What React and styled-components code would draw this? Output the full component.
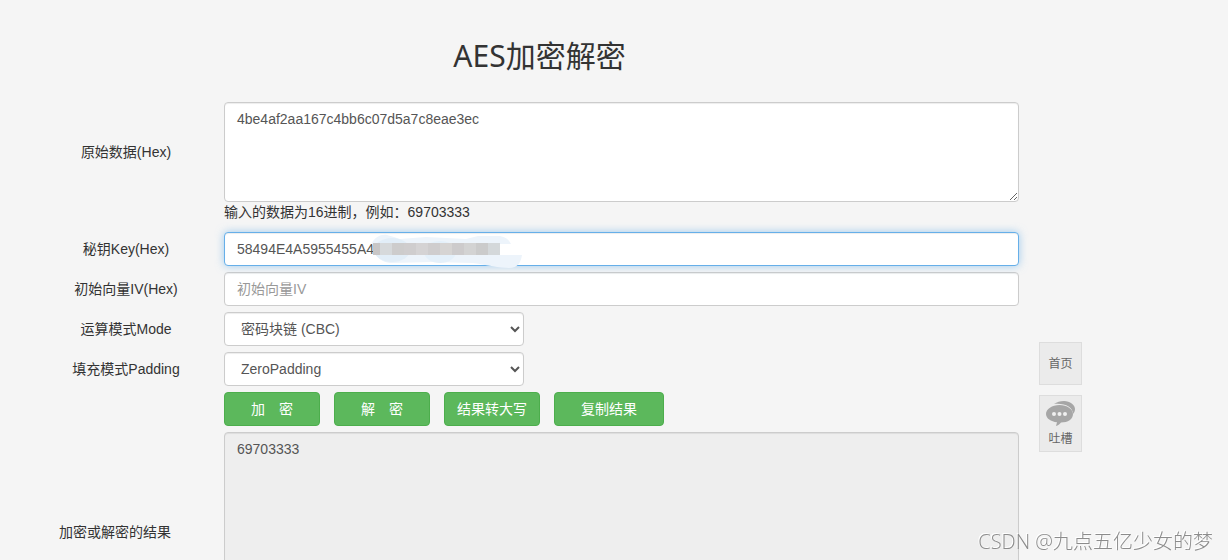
import React, { useState } from "react";
import styled, { createGlobalStyle, css } from "styled-components";

const GlobalStyle = createGlobalStyle`
  * { box-sizing: border-box; }
  body {
    margin: 0;
    background: #f5f5f5;
    color: #333;
    font: 14px/20px "Liberation Sans", "Noto Sans CJK SC", sans-serif;
    overflow: hidden;
  }
`;

const Page = styled.div`
  display: flex;
  gap: 20px;
  height: 100vh;
  overflow: hidden;
  padding: 0 146px 0 30px;
`;

const Main = styled.main`
  flex: 1;
  min-width: 0;
`;

const Title = styled.h1`
  margin: 0;
  padding: 36px 0 26px 30px;
  font: 400 30px/40px "Noto Sans", "Noto Sans CJK SC", sans-serif;
  text-align: center;
`;

const Form = styled.form`
  display: flex;
  flex-direction: column;
  gap: 6px;
`;

const Row = styled.div`
  display: grid;
  grid-template-columns: 194px minmax(0, 1fr);
  align-items: center;
`;

const Label = styled.label`
  padding-right: ${({ $inset }) => ($inset ? 24 : 2)}px;
  text-align: center;
`;

const Hint = styled.p`
  grid-column: 2;
  margin: 0 0 4px;
`;

const control = css`
  display: block;
  width: 100%;
  height: 34px;
  margin: 0;
  padding: 6px 12px;
  border: 1px solid #ccc;
  border-radius: 4px;
  background: #fff;
  color: #555;
  font: inherit;
  box-shadow: inset 0 1px 1px rgba(0, 0, 0, 0.075);
  outline: 0;
  &::placeholder { color: #999; opacity: 1; }
`;

const Input = styled.input`
  ${control}
  ${({ $active }) => $active && css`
    border-color: #66afe9;
    box-shadow: inset 0 1px 1px rgba(0, 0, 0, 0.075), 0 0 8px rgba(102, 175, 233, 0.6);
  `}
`;

const TextArea = styled.textarea`
  ${control}
  height: ${({ $tall }) => ($tall ? 200 : 100)}px;
  resize: vertical;
  &:read-only { background: #eee; }
`;

const Select = styled.select`
  ${control}
  width: 300px;
`;

const Masked = styled.div`
  position: relative;
`;

const Mosaic = styled.svg`
  position: absolute;
  left: 146px;
  top: 0;
  pointer-events: none;
`;

const Actions = styled.div`
  grid-column: 2;
  display: flex;
  gap: 14px;
`;

const Button = styled.button`
  width: ${({ $wide }) => ($wide ? 110 : 96)}px;
  height: 34px;
  padding: 0;
  border: 1px solid #4cae4c;
  border-radius: 4px;
  background: #5cb85c;
  color: #fff;
  font: inherit;
  white-space: pre;
  cursor: pointer;
`;

const Side = styled.nav`
  display: flex;
  flex-direction: column;
  gap: 10px;
  width: 43px;
  padding-top: 342px;
`;

const SideLink = styled.a`
  display: flex;
  flex-direction: column;
  align-items: center;
  padding: ${({ $icon }) => ($icon ? "4px 0 2px" : "11px 0 10px")};
  border: 1px solid #ddd;
  background: #ebebeb;
  color: #666;
  font-size: 12px;
  text-decoration: none;
`;

const Watermark = styled.div`
  position: fixed;
  right: 15px;
  bottom: 4px;
  color: #8c8c8c;
  font: 300 20px/28px "Open Sans", "Noto Sans CJK SC", sans-serif;
  text-shadow: -1px -1px 0 #fff;
`;

const tiles = ["#d6d9db", "#cdcccc", "#cfcdce", "#d5d3d4", "#cfcdce", "#d6d4d3", "#cdcbcc", "#d3d3d3", "#cbcbcb", "#d4d8da"];

function ChatIcon() {
  return (
    <svg width="30" height="29" viewBox="0 0 30 29" aria-hidden="true">
      <path fill="#a6a6a6" d="M8 4C11 2 14 1 18 1c6 0 11 4 11 8 0 2-1 4-2 5C27 7 19 3 8 4z" />
      <path fill="#a6a6a6" d="M13.500 5C21 5 27 9 27 14s-5 8.500-12 8.500c-1.500 2-3 3-5 3.500l1-3.700C5 21.500 0 18.500 0 14 0 9 6 5 13.500 5z" />
      <g fill="#f0f0f0"><circle cx="8" cy="14" r="2" /><circle cx="13.500" cy="14" r="2" /><circle cx="19" cy="14" r="2" /></g>
    </svg>
  );
}

export default function App() {
  const [data, setData] = useState("4be4af2aa167c4bb6c07d5a7c8eae3ec");
  const [key, setKey] = useState("58494E4A5955455A4");
  return (
    <>
      <GlobalStyle />
      <Page>
        <Main>
          <Title>AES加密解密</Title>
          <Form onSubmit={(e) => e.preventDefault()}>
            <Row>
              <Label htmlFor="data">原始数据(Hex)</Label>
              <TextArea id="data" value={data} spellCheck={false} onChange={(e) => setData(e.target.value)} />
              <Hint>输入的数据为16进制，例如：69703333</Hint>
            </Row>
            <Row>
              <Label htmlFor="key">秘钥Key(Hex)</Label>
              <Masked>
                <Input id="key" $active value={key} onChange={(e) => setKey(e.target.value)} />
                <Mosaic width="156" height="38" viewBox="0 0 156 38" aria-hidden="true">
                  <path fill="#edf4fb" d="M2 11C5 5 11 2 17 3c5 1 9 3 13 4l26-2 40 2 12-3h22c6 1 9 4 11 8h-15v11h26c-1 7-4 13-13 13-10 0-21-3-36-5l-40-1-43 1C12 30 7 26 5 20z" />
                  <ellipse fill="#e2eef8" cx="22" cy="18" rx="18" ry="12" />
                  <ellipse fill="#e4f0fa" cx="70" cy="20" rx="16" ry="11" />
                  <rect x="3" y="11" width="8" height="12" fill="#c8c6c6" />
                  {tiles.map((fill, i) => (
                    <rect key={i} x={i * 12 + 10} y="11" width="12" height="12" fill={fill} />
                  ))}
                </Mosaic>
              </Masked>
            </Row>
            <Row>
              <Label htmlFor="iv">初始向量IV(Hex)</Label>
              <Input id="iv" placeholder="初始向量IV" />
            </Row>
            <Row>
              <Label htmlFor="mode">运算模式Mode</Label>
              <Select id="mode"><option>密码块链 (CBC)</option></Select>
            </Row>
            <Row>
              <Label htmlFor="padding">填充模式Padding</Label>
              <Select id="padding"><option>ZeroPadding</option></Select>
            </Row>
            <Row>
              <Actions>
                <Button type="button">{"加　密"}</Button>
                <Button type="button">{"解　密"}</Button>
                <Button type="button">结果转大写</Button>
                <Button type="button" $wide>复制结果</Button>
              </Actions>
            </Row>
            <Row>
              <Label htmlFor="result" $inset>加密或解密的结果</Label>
              <TextArea id="result" $tall readOnly value="69703333" />
            </Row>
          </Form>
        </Main>
        <Side>
          <SideLink href="#home">首页</SideLink>
          <SideLink href="#feedback" $icon><ChatIcon />吐槽</SideLink>
        </Side>
      </Page>
      <Watermark>CSDN @九点五亿少女的梦</Watermark>
    </>
  );
}
